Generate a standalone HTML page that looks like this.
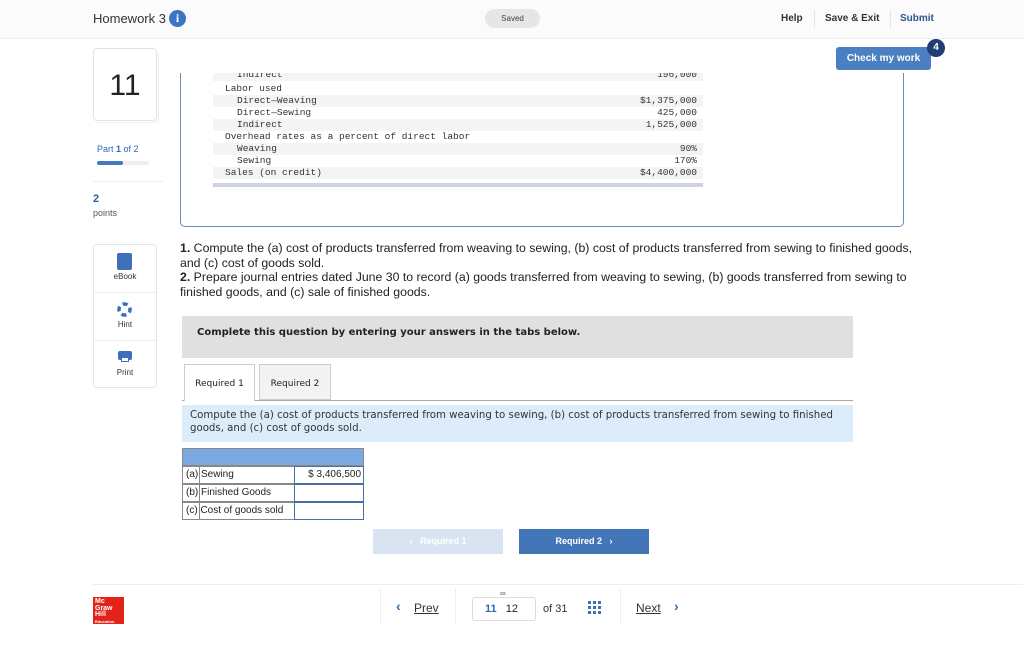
<!DOCTYPE html>
<html><head><meta charset="utf-8"><style>
*{margin:0;padding:0;box-sizing:border-box}
body{width:1024px;height:648px;background:#fff;font-family:"Liberation Sans",sans-serif;position:relative;overflow:hidden;color:#222}
.a{position:absolute}
.mono{font-family:"Liberation Mono",monospace;font-size:9.5px;color:#333}
.row{position:absolute;left:0;width:490px;height:12px;line-height:12px}
.row.s{background:#f4f4f4}
.r{position:absolute;right:6px;top:0}
.td{position:absolute;border:1px solid #888;font-size:10px;line-height:16px;padding-left:3px;height:18px}
</style></head><body>
<div class="a" style="left:0;top:0;width:1024px;height:39px;background:#fbfbfb;border-bottom:1px solid #eee"></div>
<div class="a" style="left:93px;top:11px;font-size:13px;color:#333">Homework 3</div>
<div class="a" style="left:169px;top:10px;width:17px;height:17px;border-radius:50%;background:#3a74c4;color:#fff;font-size:12px;font-weight:bold;text-align:center;line-height:17px;font-family:'Liberation Serif',serif">i</div>
<div class="a" style="left:485px;top:9px;width:55px;height:19px;border-radius:10px;background:#e6e6e8;font-size:8px;text-align:center;line-height:19px;color:#444">Saved</div>
<div class="a" style="left:781px;top:13px;font-size:10px;font-weight:bold;color:#333">Help</div>
<div class="a" style="left:814px;top:10px;width:1px;height:18px;background:#e4e4e4"></div>
<div class="a" style="left:825px;top:13px;font-size:10px;font-weight:bold;color:#333">Save &amp; Exit</div>
<div class="a" style="left:890px;top:10px;width:1px;height:18px;background:#e4e4e4"></div>
<div class="a" style="left:900px;top:13px;font-size:10px;font-weight:bold;color:#2c5592">Submit</div>

<div class="a" style="left:95px;top:51px;width:64px;height:72px;border:1px solid #eee;border-radius:4px"></div>
<div class="a" style="left:93px;top:48px;width:64px;height:73px;border:1px solid #e2e2e2;border-radius:4px;background:#fff;font-size:30px;text-align:center;line-height:73px;color:#222">11</div>
<div class="a" style="left:97px;top:144px;font-size:9px;color:#2f6ab5">Part <b>1</b> of 2</div>
<div class="a" style="left:97px;top:161px;width:52px;height:4px;border-radius:2px;background:#eee"></div>
<div class="a" style="left:97px;top:161px;width:26px;height:4px;border-radius:2px;background:#3f78c3"></div>
<div class="a" style="left:93px;top:181px;width:70px;height:1px;background:#eee"></div>
<div class="a" style="left:93px;top:193px;font-size:11px;color:#2f5e9e;font-weight:bold">2</div>
<div class="a" style="left:93px;top:208px;font-size:9px;color:#555">points</div>

<div class="a" style="left:93px;top:244px;width:64px;height:144px;border:1px solid #e6e6e6;border-radius:4px"></div>
<div class="a" style="left:94px;top:292px;width:62px;height:1px;background:#eee"></div>
<div class="a" style="left:94px;top:340px;width:62px;height:1px;background:#eee"></div>
<div class="a" style="left:117px;top:253px;width:15px;height:17px;background:#3f6fb8;border-radius:2px"></div>
<div class="a" style="left:93px;top:272px;width:64px;text-align:center;font-size:8px;color:#333">eBook</div>
<svg class="a" style="left:117px;top:302px" width="15" height="15" viewBox="0 0 15 15"><circle cx="7.5" cy="7.5" r="5.5" fill="none" stroke="#3f6fb8" stroke-width="3.5" stroke-dasharray="5 3.6" transform="rotate(-20 7.5 7.5)"/></svg>
<div class="a" style="left:93px;top:320px;width:64px;text-align:center;font-size:8px;color:#333">Hint</div>
<div class="a" style="left:118px;top:351px;width:14px;height:9px;background:#3f6fb8;border-radius:2px"></div>
<div class="a" style="left:121px;top:357px;width:8px;height:5px;background:#fff;border:1px solid #3f6fb8"></div>
<div class="a" style="left:93px;top:368px;width:64px;text-align:center;font-size:8px;color:#333">Print</div>

<div class="a" style="left:180px;top:73px;width:724px;height:154px;border:1.5px solid #6a8bbb;border-top:none;border-radius:0 0 5px 5px;overflow:hidden">
 <div class="a mono" style="left:32px;top:0;width:490px;height:120px">
  <div class="row s" style="top:-4px;padding-left:24px">Indirect<span class="r">196,000</span></div>
  <div class="row" style="top:10px;padding-left:12px">Labor used</div>
  <div class="row s" style="top:22px;padding-left:24px">Direct—Weaving<span class="r">$1,375,000</span></div>
  <div class="row" style="top:34px;padding-left:24px">Direct—Sewing<span class="r">425,000</span></div>
  <div class="row s" style="top:46px;padding-left:24px">Indirect<span class="r">1,525,000</span></div>
  <div class="row" style="top:58px;padding-left:12px">Overhead rates as a percent of direct labor</div>
  <div class="row s" style="top:70px;padding-left:24px">Weaving<span class="r">90%</span></div>
  <div class="row" style="top:82px;padding-left:24px">Sewing<span class="r">170%</span></div>
  <div class="row s" style="top:94px;padding-left:12px">Sales (on credit)<span class="r">$4,400,000</span></div>
  <div class="row" style="top:110px;height:4px;background:#cdd3e1"></div>
 </div>
</div>

<div class="a" style="left:836px;top:47px;width:95px;height:23px;border-radius:3px;background:#4a7fc1;color:#fff;font-size:10px;font-weight:bold;text-align:center;line-height:23px">Check my work</div>
<div class="a" style="left:927px;top:39px;width:18px;height:18px;border-radius:50%;background:#1f3f73;color:#fff;font-size:10px;font-weight:bold;text-align:center;line-height:18px">4</div>

<div class="a" style="left:180px;top:241px;width:800px;white-space:nowrap;font-size:12.3px;line-height:14.5px;color:#222"><b>1.</b> Compute the (a) cost of products transferred from weaving to sewing, (b) cost of products transferred from sewing to finished goods,<br>and (c) cost of goods sold.<br><b>2.</b> Prepare journal entries dated June 30 to record (a) goods transferred from weaving to sewing, (b) goods transferred from sewing to<br>finished goods, and (c) sale of finished goods.</div>

<div class="a" style="left:182px;top:316px;width:671px;height:42px;background:#e0e0e0;font-family:'DejaVu Sans',sans-serif;font-size:10px;font-weight:bold;line-height:34px;padding-left:15px">Complete this question by entering your answers in the tabs below.</div>
<div class="a" style="left:182px;top:400px;width:671px;height:1px;background:#aaa"></div>
<div class="a" style="left:184px;top:364px;width:71px;height:37px;border:1px solid #ccc;border-bottom:none;background:#fff;font-family:'DejaVu Sans',sans-serif;font-size:9px;text-align:center;line-height:38px">Required 1</div>
<div class="a" style="left:259px;top:364px;width:72px;height:36px;border:1px solid #ccc;background:#f3f3f3;font-family:'DejaVu Sans',sans-serif;font-size:9px;text-align:center;line-height:38px">Required 2</div>
<div class="a" style="left:182px;top:405px;width:671px;height:37px;background:#dcecfa;font-family:'DejaVu Sans',sans-serif;font-size:10.2px;line-height:13px;padding:4px 8px;color:#333;white-space:nowrap">Compute the (a) cost of products transferred from weaving to sewing, (b) cost of products transferred from sewing to finished<br>goods, and (c) cost of goods sold.</div>

<div class="a" style="left:182px;top:448px;width:182px;height:18px;background:#7aaae1;border:1px solid #888"></div>
<div class="td" style="left:182px;top:466px;width:113px">(a) Sewing</div>
<div class="td" style="left:182px;top:484px;width:113px">(b) Finished Goods</div>
<div class="td" style="left:182px;top:502px;width:113px">(c) Cost of goods sold</div>
<div class="a" style="left:199px;top:466px;width:1px;height:54px;background:#888"></div>
<div class="td" style="left:294px;top:466px;width:70px;border-color:#4a6fa5;text-align:right;padding-right:2px">$ 3,406,500</div>
<div class="td" style="left:294px;top:484px;width:70px;border-color:#4a6fa5"></div>
<div class="td" style="left:294px;top:502px;width:70px;border-color:#4a6fa5"></div>

<div class="a" style="left:373px;top:529px;width:130px;height:25px;background:#d8e4f1;color:#fff;font-size:9px;font-weight:bold;text-align:center;line-height:25px">‹&nbsp;&nbsp;&nbsp;Required 1</div>
<div class="a" style="left:519px;top:529px;width:130px;height:25px;background:#4276b9;color:#fff;font-size:9px;font-weight:bold;text-align:center;line-height:25px">Required 2&nbsp;&nbsp;&nbsp;›</div>

<div class="a" style="left:93px;top:584px;width:930px;height:1px;background:#eee"></div>
<div class="a" style="left:93px;top:597px;width:31px;height:27px;background:#e2231a;color:#fff;font-size:7px;font-weight:bold;line-height:6.5px;padding:2px">Mc<br>Graw<br>Hill<br><span style="font-size:4px">Education</span></div>
<div class="a" style="left:380px;top:588px;width:1px;height:36px;background:#eee"></div>
<div class="a" style="left:455px;top:588px;width:1px;height:36px;background:#eee"></div>
<div class="a" style="left:620px;top:588px;width:1px;height:36px;background:#eee"></div>
<div class="a" style="left:396px;top:598px;font-size:14px;font-weight:bold;color:#2f6ab5">‹</div>
<div class="a" style="left:414px;top:601px;font-size:12px;color:#333;text-decoration:underline">Prev</div>
<div class="a" style="left:472px;top:597px;width:64px;height:24px;border:1px solid #ddd;border-radius:3px;font-size:11px;line-height:22px;padding-left:12px"><span style="color:#2f6ab5;font-weight:bold">11</span>&nbsp;&nbsp;&nbsp;12</div>
<div class="a" style="left:500px;top:589px;font-size:8px;color:#555">∞</div>
<div class="a" style="left:543px;top:603px;font-size:11px;color:#333">of 31</div>
<div class="a" style="left:588px;top:601px;width:13px;height:13px;background:repeating-linear-gradient(90deg,#3a6fc0 0 3px,#fff 3px 5px);"></div>
<div class="a" style="left:588px;top:601px;width:13px;height:13px;background:repeating-linear-gradient(0deg,transparent 0 3px,#fff 3px 5px);"></div>
<div class="a" style="left:636px;top:601px;font-size:12px;color:#333;text-decoration:underline">Next</div>
<div class="a" style="left:674px;top:598px;font-size:14px;font-weight:bold;color:#2f6ab5">›</div>
</body></html>
